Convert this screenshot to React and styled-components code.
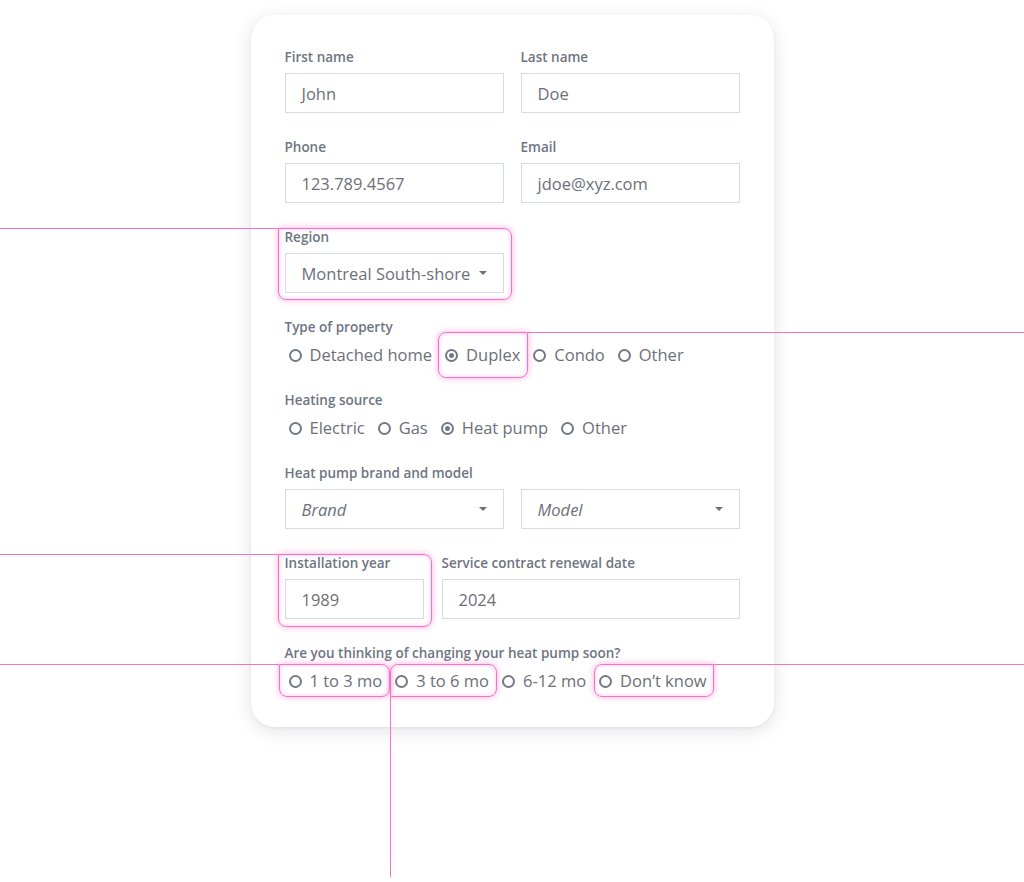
import React from 'react'
import styled, { createGlobalStyle, css } from 'styled-components'

const GlobalStyle = createGlobalStyle`
  html, body {
    margin: 0;
    padding: 0;
    background: #ffffff;
  }
  body {
    font-family: "Open Sans", "Noto Sans", sans-serif;
    -webkit-font-smoothing: antialiased;
  }
`

const PINK = '#f472c6'
const TEXT = '#6c7078'
const LABEL = '#6e7581'
const BORDER = '#d5dbe2'

const Page = styled.div`
  width: 100%;
  min-height: 882px;
  overflow: hidden;
  position: relative;
  padding-top: 15px;
  box-sizing: border-box;
`

const Card = styled.div`
  width: 523px;
  box-sizing: border-box;
  margin: 0 auto;
  padding: 33px 34px 35px;
  background: #fff;
  border-radius: 24px;
  box-shadow: 0 4px 18px rgba(40, 40, 60, 0.13), 0 1px 3px rgba(40, 40, 60, 0.05);
  display: flex;
  flex-direction: column;
  gap: 25px;
`

const Row = styled.div`
  display: grid;
  grid-template-columns: ${p => p.cols || 'minmax(0, 1fr) minmax(0, 1fr)'};
  column-gap: ${p => p.gap || 17}px;
`

const Field = styled.div`
  display: flex;
  flex-direction: column;
  min-width: 0;
`

const Label = styled.div`
  font-size: 13.5px;
  line-height: 18px;
  font-weight: 600;
  color: ${LABEL};
  margin-bottom: ${p => (p.tight ? 8 : 7)}px;
  white-space: nowrap;
`

const Box = styled.div`
  height: 40px;
  box-sizing: border-box;
  border: 1px solid ${BORDER};
  padding: 0 16px 0 16px;
  display: flex;
  align-items: center;
  justify-content: space-between;
  font-size: 16.5px;
  color: ${TEXT};
  font-style: ${p => (p.placeholder ? 'italic' : 'normal')};
  white-space: nowrap;
`

const Caret = styled.span`
  width: 0;
  height: 0;
  border-left: 4.5px solid transparent;
  border-right: 4.5px solid transparent;
  border-top: 4.5px solid ${TEXT};
  margin-left: 6px;
  flex-shrink: 0;
`

const RadioGroup = styled.div`
  display: flex;
  align-items: center;
  gap: 13px;
  padding-left: 4px;
`

const RadioItem = styled.label`
  display: inline-flex;
  align-items: center;
  gap: 8px;
  font-size: 16.5px;
  line-height: 22px;
  color: ${TEXT};
  white-space: nowrap;
`

const Dot = styled.span`
  width: 13px;
  height: 13px;
  box-sizing: border-box;
  border: 2px solid #737a85;
  border-radius: 50%;
  display: inline-flex;
  align-items: center;
  justify-content: center;
  &::after {
    content: '';
    width: 5px;
    height: 5px;
    border-radius: 50%;
    background: ${p => (p.checked ? '#737a85' : 'transparent')};
  }
`

/* annotation overlay: a glowing pink frame around a part, with a guide line */
const lineStyles = {
  left: css`
    top: ${p => -p.t}px;
    right: calc(100% + ${p => p.l}px);
    width: 1200px;
    height: 1px;
  `,
  right: css`
    top: ${p => -p.t}px;
    left: calc(100% + ${p => p.r}px);
    width: 1200px;
    height: 1px;
  `,
  down: css`
    top: calc(100% + ${p => p.b}px);
    left: ${p => -p.l}px;
    width: 1px;
    height: 180px;
  `,
}

const cornerFor = {
  left: 'border-top-left-radius: 0;',
  right: 'border-top-right-radius: 0;',
  down: 'border-bottom-left-radius: 0;',
}

const Highlight = styled.div`
  position: relative;
  display: ${p => (p.inline ? 'inline-flex' : 'flex')};
  flex-direction: column;
  min-width: 0;
  &::before {
    content: '';
    position: absolute;
    top: ${p => -p.t}px;
    right: ${p => -p.r}px;
    bottom: ${p => -p.b}px;
    left: ${p => -p.l}px;
    border: 1.5px solid ${PINK};
    border-radius: 8px;
    ${p => cornerFor[p.line]}
    box-shadow: 0 0 6px rgba(244, 114, 198, 0.6), inset 0 0 4px rgba(244, 114, 198, 0.4);
    pointer-events: none;
  }
  &::after {
    content: '';
    position: absolute;
    background: ${PINK};
    ${p => lineStyles[p.line]}
  }
`

const Radio = ({ label, checked }) => (
  <RadioItem>
    <Dot checked={checked} />
    {label}
  </RadioItem>
)

const TextField = ({ label, value }) => (
  <Field>
    <Label>{label}</Label>
    <Box>{value}</Box>
  </Field>
)

export default function App() {
  return (
    <Page>
      <GlobalStyle />
      <Card>
        <Row>
          <TextField label="First name" value="John" />
          <TextField label="Last name" value="Doe" />
        </Row>

        <Row>
          <TextField label="Phone" value="123.789.4567" />
          <TextField label="Email" value="jdoe@xyz.com" />
        </Row>

        <Row>
          <Highlight line="left" t={0} r={8} b={7} l={7}>
            <Field>
              <Label>Region</Label>
              <Box>
                Montreal South-shore
                <Caret />
              </Box>
            </Field>
          </Highlight>
        </Row>

        <Field>
          <Label tight>Type of property</Label>
          <RadioGroup>
            <Radio label="Detached home" />
            <Highlight inline line="right" t={12} r={8} b={12} l={7}>
              <Radio label="Duplex" checked />
            </Highlight>
            <Radio label="Condo" />
            <Radio label="Other" />
          </RadioGroup>
        </Field>

        <Field>
          <Label tight>Heating source</Label>
          <RadioGroup>
            <Radio label="Electric" />
            <Radio label="Gas" />
            <Radio label="Heat pump" checked />
            <Radio label="Other" />
          </RadioGroup>
        </Field>

        <Field>
          <Label>Heat pump brand and model</Label>
          <Row>
            <Box placeholder>
              Brand
              <Caret />
            </Box>
            <Box placeholder>
              Model
              <Caret />
            </Box>
          </Row>
        </Field>

        <Row cols="139px minmax(0, 1fr)" gap={18}>
          <Highlight line="left" t={0} r={8} b={8} l={7}>
            <TextField label="Installation year" value="1989" />
          </Highlight>
          <TextField label="Service contract renewal date" value="2024" />
        </Row>

        <Field>
          <Label tight>Are you thinking of changing your heat pump soon?</Label>
          <RadioGroup>
            <Highlight inline line="left" t={6} r={8} b={5} l={10}>
              <Radio label="1 to 3 mo" />
            </Highlight>
            <Highlight inline line="down" t={6} r={8} b={5} l={5}>
              <Radio label="3 to 6 mo" />
            </Highlight>
            <Radio label="6-12 mo" />
            <Highlight inline line="right" t={6} r={7} b={5} l={5}>
              <Radio label="Don’t know" />
            </Highlight>
          </RadioGroup>
        </Field>
      </Card>
    </Page>
  )
}
